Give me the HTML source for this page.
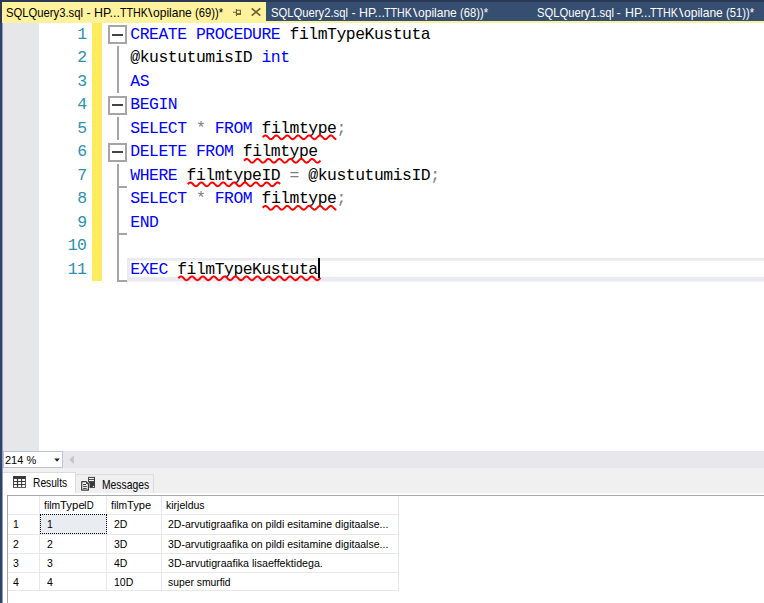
<!DOCTYPE html>
<html lang="et">
<head>
<meta charset="utf-8">
<title>SQLQuery3.sql</title>
<style>
html,body{margin:0;padding:0;}
body{width:764px;height:603px;overflow:hidden;background:#fff;position:relative;font-family:"Liberation Sans",sans-serif;}
.abs{position:absolute;}
#topstrip{left:0;top:0;width:764px;height:2px;background:#293955;}
#tabbar{left:0;top:2px;width:764px;height:19px;background:#364e6f;}
#yline{left:0;top:20.6px;width:764px;height:2.3px;background:#fff29d;}
#lborder{left:0;top:0;width:2px;height:603px;background:linear-gradient(#293955 0,#293955 22px,#30446a 24px,#30446a 100%);}
#lborder2{left:2px;top:23px;width:1.2px;height:580px;background:#8f9dc0;}
#acttab{left:2px;top:2px;width:264px;height:21px;background:#fff29d;}
.tabtxt{top:3.8px;height:19px;line-height:19px;font-size:12.2px;white-space:pre;}
#gutter{left:3px;top:23px;width:36px;height:428px;background:#e6e7e8;}
#ybar{left:92px;top:23px;width:10px;height:258.4px;background:#ffeb5e;}
.ln{left:40px;width:46.5px;text-align:right;color:#2b91af;}
.code,.ln{font-family:"Liberation Mono",monospace;font-size:16.4px;letter-spacing:-0.465px;line-height:23.5px;height:23.5px;white-space:pre;}
.code{left:130.3px;color:#000;}
.k{color:#0000ff}.g{color:#808080}
.box{left:108px;width:15px;height:15px;border:2px solid #a5a5a5;background:#fff;}
.box i{position:absolute;left:2px;top:6.5px;width:11px;height:2px;background:#444;}
.vl{left:117px;width:2px;background:#a5a5a5;}
.tick{left:117px;width:10px;height:2px;background:#a5a5a5;}
#curline{left:127px;top:258px;width:637px;height:16.2px;border:solid #eaeaf2;border-width:2.7px 0 4.8px 2.85px;}
#caret{left:318.2px;top:258.2px;width:2px;height:20.3px;background:#000;}
#scrollband{left:3px;top:451px;width:761px;height:17px;background:#e8e8ec;}
#zoombox{left:3px;top:451px;width:58px;height:15px;border:1px solid #b9c1d9;background:#fff;}
#restabrow{left:3px;top:468px;width:761px;height:25px;background:#f0f0f0;}
.sm{font-size:11px;white-space:nowrap;color:#000;transform-origin:0 50%;}
.gl{background:#e8e8e8;}
.gc,.gh{font-size:11.6px;white-space:pre;}
</style>
</head>
<body>
<div class="abs" id="topstrip"></div>
<div class="abs" id="tabbar"></div>
<div class="abs" id="yline"></div>
<div class="abs" id="acttab"></div>
<div class="abs" id="lborder"></div>
<div class="abs" id="lborder2"></div>
<div class="abs tabtxt" id="t1" style="left:5.8px;color:#000;"><span style="display:inline-block;transform-origin:0 50%;transform:scaleX(0.9229);margin-right:-6.43px">SQLQuery3.sql</span><span style="display:inline-block;transform-origin:0 50%;transform:scaleX(1.0236);margin-right:0.26px"> - </span><span style="display:inline-block;transform-origin:0 50%;transform:scaleX(1.0144);margin-right:0.37px">HP...</span><span style="display:inline-block;transform-origin:0 50%;transform:scaleX(0.8797);margin-right:-3.83px">TTHK</span><span style="display:inline-block;transform-origin:0 50%;transform:scaleX(1.3000);margin-left:0.55px;margin-right:1.56px">\</span><span style="display:inline-block;transform-origin:0 50%;transform:scaleX(0.9870);margin-right:-0.51px">opilane</span><span style="display:inline-block;transform-origin:0 50%;transform:scaleX(0.8258);margin-right:-0.59px"> </span><span style="display:inline-block;transform-origin:0 50%;transform:scaleX(0.9185);margin-right:-2.48px">(69))*</span></div>
<div class="abs tabtxt" id="t2" style="left:270.6px;color:#fff;"><span style="display:inline-block;transform-origin:0 50%;transform:scaleX(0.9229);margin-right:-6.43px">SQLQuery2.sql</span><span style="display:inline-block;transform-origin:0 50%;transform:scaleX(1.0236);margin-right:0.26px"> - </span><span style="display:inline-block;transform-origin:0 50%;transform:scaleX(1.0144);margin-right:0.37px">HP...</span><span style="display:inline-block;transform-origin:0 50%;transform:scaleX(0.8797);margin-right:-3.83px">TTHK</span><span style="display:inline-block;transform-origin:0 50%;transform:scaleX(1.3000);margin-left:0.55px;margin-right:1.56px">\</span><span style="display:inline-block;transform-origin:0 50%;transform:scaleX(0.9870);margin-right:-0.51px">opilane</span><span style="display:inline-block;transform-origin:0 50%;transform:scaleX(0.8258);margin-right:-0.59px"> </span><span style="display:inline-block;transform-origin:0 50%;transform:scaleX(0.9185);margin-right:-2.48px">(68))*</span></div>
<div class="abs tabtxt" id="t3" style="left:536.5px;color:#fff;"><span style="display:inline-block;transform-origin:0 50%;transform:scaleX(0.9229);margin-right:-6.43px">SQLQuery1.sql</span><span style="display:inline-block;transform-origin:0 50%;transform:scaleX(1.0236);margin-right:0.26px"> - </span><span style="display:inline-block;transform-origin:0 50%;transform:scaleX(1.0144);margin-right:0.37px">HP...</span><span style="display:inline-block;transform-origin:0 50%;transform:scaleX(0.8797);margin-right:-3.83px">TTHK</span><span style="display:inline-block;transform-origin:0 50%;transform:scaleX(1.3000);margin-left:0.55px;margin-right:1.56px">\</span><span style="display:inline-block;transform-origin:0 50%;transform:scaleX(0.9870);margin-right:-0.51px">opilane</span><span style="display:inline-block;transform-origin:0 50%;transform:scaleX(0.8258);margin-right:-0.59px"> </span><span style="display:inline-block;transform-origin:0 50%;transform:scaleX(0.9185);margin-right:-2.48px">(51))*</span></div>
<svg class="abs" style="left:230px;top:4px" width="34" height="17" viewBox="0 0 34 17">
 <g stroke="#6a5d30" stroke-width="1.1" fill="none">
  <path d="M3,8.3 H6.4 M6.45,5 V11.9 M6.4,6.2 H10.4 V10"/>
  <rect x="6.4" y="9.2" width="4.5" height="1.8" fill="#6a5d30" stroke="none"/>
  <path d="M21.7,4.4 L30.3,11.6 M30.3,4.4 L21.7,11.6" stroke-width="1.5"/>
 </g>
</svg>
<div class="abs" id="gutter"></div>
<div class="abs" id="ybar"></div>

<svg class="abs" style="left:0;top:255px" width="764" height="30" viewBox="0 255 764 30"><rect x="127" y="258" width="640" height="23.7" fill="#eaeaf2"/><rect x="129.85" y="260.65" width="640" height="16.25" fill="#fff"/></svg>
<div class="abs box" style="top:25.15px"><i></i></div>
<div class="abs box" style="top:95.65px"><i></i></div>
<div class="abs box" style="top:142.65px"><i></i></div>
<div class="abs vl" style="top:46.40px;height:47.00px"></div>
<div class="abs vl" style="top:116.90px;height:23.50px"></div>
<div class="abs vl" style="top:163.90px;height:117.50px"></div>
<div class="abs tick" style="top:185.90px"></div>
<div class="abs tick" style="top:232.90px"></div>
<div class="abs tick" style="top:279.90px"></div>
<div class="abs ln" style="top:22.70px">1</div>
<div class="abs code" style="top:22.70px"><span class="k">CREATE PROCEDURE</span> filmTypeKustuta</div>
<div class="abs ln" style="top:46.20px">2</div>
<div class="abs code" style="top:46.20px">@kustutumisID <span class="k">int</span></div>
<div class="abs ln" style="top:69.70px">3</div>
<div class="abs code" style="top:69.70px"><span class="k">AS</span></div>
<div class="abs ln" style="top:93.20px">4</div>
<div class="abs code" style="top:93.20px"><span class="k">BEGIN</span></div>
<div class="abs ln" style="top:116.70px">5</div>
<div class="abs code" style="top:116.70px"><span class="k">SELECT</span> <span class="g">*</span> <span class="k">FROM</span> filmtype<span class="g">;</span></div>
<div class="abs ln" style="top:140.20px">6</div>
<div class="abs code" style="top:140.20px"><span class="k">DELETE FROM</span> filmtype</div>
<div class="abs ln" style="top:163.70px">7</div>
<div class="abs code" style="top:163.70px"><span class="k">WHERE</span> filmtypeID <span class="g">=</span> @kustutumisID<span class="g">;</span></div>
<div class="abs ln" style="top:187.20px">8</div>
<div class="abs code" style="top:187.20px"><span class="k">SELECT</span> <span class="g">*</span> <span class="k">FROM</span> filmtype<span class="g">;</span></div>
<div class="abs ln" style="top:210.70px">9</div>
<div class="abs code" style="top:210.70px"><span class="k">END</span></div>
<div class="abs ln" style="top:234.20px">10</div>
<div class="abs ln" style="top:257.70px">11</div>
<div class="abs code" style="top:257.70px"><span class="k">EXEC</span> filmTypeKustuta</div>
<svg class="abs" style="left:0;top:0" width="764" height="300" viewBox="0 0 764 300"><g fill="none" stroke="#ff0000" stroke-width="1.95" stroke-linecap="butt" stroke-linejoin="round"><path d="M262.75,137.27 L263.44,136.53 L264.14,135.92 L264.83,135.52 L265.53,135.40 L266.22,135.58 L266.92,136.04 L267.61,136.69 L268.30,137.44 L269.00,138.17 L269.69,138.76 L270.39,139.12 L271.08,139.19 L271.78,138.96 L272.47,138.47 L273.17,137.80 L273.86,137.04 L274.55,136.33 L275.25,135.77 L275.94,135.45 L276.64,135.43 L277.33,135.70 L278.03,136.22 L278.72,136.91 L279.41,137.67 L280.11,138.37 L280.80,138.89 L281.50,139.17 L282.19,139.15 L282.89,138.84 L283.58,138.28 L284.27,137.57 L284.97,136.82 L285.66,136.14 L286.36,135.65 L287.05,135.41 L287.75,135.48 L288.44,135.83 L289.13,136.42 L289.83,137.14 L290.52,137.89 L291.22,138.55 L291.91,139.01 L292.61,139.20 L293.30,139.09 L294.00,138.69 L294.69,138.08 L295.38,137.34 L296.08,136.60 L296.77,135.97 L297.47,135.55 L298.16,135.40 L298.86,135.56 L299.55,135.99 L300.24,136.62 L300.94,137.37 L301.63,138.10 L302.33,138.71 L303.02,139.10 L303.72,139.20 L304.41,139.00 L305.10,138.53 L305.80,137.87 L306.49,137.12 L307.19,136.39 L307.88,135.81 L308.58,135.47 L309.27,135.42 L309.97,135.66 L310.66,136.16 L311.35,136.84 L312.05,137.60 L312.74,138.31 L313.44,138.85 L314.13,139.16 L314.83,139.17 L315.52,138.88 L316.21,138.35 L316.91,137.64 L317.60,136.89 L318.30,136.20 L318.99,135.68 L319.69,135.42 L320.38,135.46 L321.07,135.79 L321.77,136.35 L322.46,137.07 L323.16,137.82 L323.85,138.49 L324.55,138.97 L325.24,139.19 L325.93,139.11 L326.63,138.74 L327.32,138.15 L328.02,137.42 L328.71,136.67 L329.41,136.02 L330.10,135.57 L330.80,135.40 L331.49,135.53 L332.18,135.93 L332.88,136.56 L333.57,137.30 L334.27,138.04 L334.96,138.66 L335.66,139.07 L336.35,139.20"/><path d="M244.00,160.77 L244.70,160.03 L245.39,159.42 L246.09,159.02 L246.78,158.90 L247.48,159.09 L248.17,159.54 L248.87,160.20 L249.56,160.95 L250.26,161.68 L250.95,162.27 L251.65,162.62 L252.35,162.69 L253.04,162.45 L253.74,161.96 L254.43,161.28 L255.13,160.52 L255.82,159.81 L256.52,159.26 L257.21,158.95 L257.91,158.93 L258.60,159.21 L259.30,159.74 L260.00,160.44 L260.69,161.20 L261.39,161.89 L262.08,162.41 L262.78,162.68 L263.47,162.64 L264.17,162.32 L264.86,161.75 L265.56,161.04 L266.25,160.28 L266.95,159.61 L267.65,159.13 L268.34,158.91 L269.04,158.99 L269.73,159.36 L270.43,159.96 L271.12,160.69 L271.82,161.44 L272.51,162.09 L273.21,162.53 L273.90,162.70 L274.60,162.57 L275.30,162.16 L275.99,161.53 L276.69,160.79 L277.38,160.05 L278.08,159.43 L278.77,159.02 L279.47,158.90 L280.16,159.08 L280.86,159.53 L281.55,160.19 L282.25,160.94 L282.95,161.67 L283.64,162.26 L284.34,162.62 L285.03,162.69 L285.73,162.46 L286.42,161.97 L287.12,161.29 L287.81,160.54 L288.51,159.83 L289.20,159.27 L289.90,158.95 L290.60,158.93 L291.29,159.20 L291.99,159.73 L292.68,160.43 L293.38,161.18 L294.07,161.88 L294.77,162.40 L295.46,162.67 L296.16,162.65 L296.85,162.33 L297.55,161.77 L298.25,161.05 L298.94,160.30 L299.64,159.62 L300.33,159.13 L301.03,158.91 L301.72,158.99 L302.42,159.35 L303.11,159.94 L303.81,160.67 L304.50,161.42 L305.20,162.07 L305.90,162.52 L306.59,162.70 L307.29,162.57 L307.98,162.17 L308.68,161.54 L309.37,160.80 L310.07,160.06 L310.76,159.44 L311.46,159.03 L312.15,158.90 L312.85,159.07 L313.55,159.52 L314.24,160.17 L314.94,160.92 L315.63,161.65 L316.33,162.25 L317.02,162.61 L317.72,162.69 L318.41,162.47 L319.11,161.98 L319.80,161.31 L320.50,160.55"/><path d="M187.75,184.27 L188.45,183.53 L189.15,182.91 L189.85,182.51 L190.55,182.40 L191.25,182.60 L191.95,183.07 L192.65,183.73 L193.35,184.49 L194.05,185.21 L194.75,185.80 L195.45,186.14 L196.15,186.18 L196.85,185.92 L197.54,185.41 L198.24,184.71 L198.94,183.95 L199.64,183.25 L200.34,182.71 L201.04,182.43 L201.74,182.45 L202.44,182.76 L203.14,183.33 L203.84,184.04 L204.54,184.80 L205.24,185.48 L205.94,185.97 L206.64,186.19 L207.34,186.11 L208.04,185.74 L208.74,185.13 L209.44,184.39 L210.14,183.64 L210.84,183.00 L211.54,182.56 L212.24,182.40 L212.94,182.55 L213.64,182.97 L214.34,183.62 L215.04,184.37 L215.73,185.11 L216.43,185.72 L217.13,186.10 L217.83,186.19 L218.53,185.98 L219.23,185.51 L219.93,184.83 L220.63,184.07 L221.33,183.35 L222.03,182.78 L222.73,182.46 L223.43,182.42 L224.13,182.70 L224.83,183.22 L225.53,183.92 L226.23,184.69 L226.93,185.38 L227.63,185.91 L228.33,186.18 L229.03,186.14 L229.73,185.81 L230.43,185.24 L231.13,184.52 L231.83,183.76 L232.53,183.09 L233.23,182.61 L233.93,182.40 L234.62,182.50 L235.32,182.89 L236.02,183.50 L236.72,184.24 L237.42,184.99 L238.12,185.63 L238.82,186.06 L239.52,186.20 L240.22,186.04 L240.92,185.60 L241.62,184.95 L242.32,184.20 L243.02,183.46 L243.72,182.86 L244.42,182.49 L245.12,182.41 L245.82,182.63 L246.52,183.12 L247.22,183.81 L247.92,184.56 L248.62,185.28 L249.32,185.84 L250.02,186.15 L250.72,186.17 L251.42,185.88 L252.12,185.34 L252.81,184.64 L253.51,183.88 L254.21,183.18 L254.91,182.67 L255.61,182.42 L256.31,182.47 L257.01,182.81 L257.71,183.39 L258.41,184.12 L259.11,184.88 L259.81,185.54 L260.51,186.01 L261.21,186.20 L261.91,186.08 L262.61,185.68 L263.31,185.06 L264.01,184.32 L264.71,183.57 L265.41,182.94 L266.11,182.53 L266.81,182.40 L267.51,182.58 L268.21,183.03 L268.91,183.69 L269.61,184.44 L270.31,185.18 L271.00,185.77 L271.70,186.12 L272.40,186.19 L273.10,185.95 L273.80,185.44 L274.50,184.76 L275.20,184.00 L275.90,183.29 L276.60,182.74 L277.30,182.44 L278.00,182.44 L278.70,182.74 L279.40,183.29 L280.10,184.00"/><path d="M262.75,207.77 L263.44,207.03 L264.14,206.42 L264.83,206.02 L265.53,205.90 L266.22,206.08 L266.92,206.54 L267.61,207.19 L268.30,207.94 L269.00,208.67 L269.69,209.26 L270.39,209.62 L271.08,209.69 L271.78,209.46 L272.47,208.97 L273.17,208.30 L273.86,207.54 L274.55,206.83 L275.25,206.27 L275.94,205.95 L276.64,205.93 L277.33,206.20 L278.03,206.72 L278.72,207.41 L279.41,208.17 L280.11,208.87 L280.80,209.39 L281.50,209.67 L282.19,209.65 L282.89,209.34 L283.58,208.78 L284.27,208.07 L284.97,207.32 L285.66,206.64 L286.36,206.15 L287.05,205.91 L287.75,205.98 L288.44,206.33 L289.13,206.92 L289.83,207.64 L290.52,208.39 L291.22,209.05 L291.91,209.51 L292.61,209.70 L293.30,209.59 L294.00,209.19 L294.69,208.58 L295.38,207.84 L296.08,207.10 L296.77,206.47 L297.47,206.05 L298.16,205.90 L298.86,206.06 L299.55,206.49 L300.24,207.12 L300.94,207.87 L301.63,208.60 L302.33,209.21 L303.02,209.60 L303.72,209.70 L304.41,209.50 L305.10,209.03 L305.80,208.37 L306.49,207.62 L307.19,206.89 L307.88,206.31 L308.58,205.97 L309.27,205.92 L309.97,206.16 L310.66,206.66 L311.35,207.34 L312.05,208.10 L312.74,208.81 L313.44,209.35 L314.13,209.66 L314.83,209.67 L315.52,209.38 L316.21,208.85 L316.91,208.14 L317.60,207.39 L318.30,206.70 L318.99,206.18 L319.69,205.92 L320.38,205.96 L321.07,206.29 L321.77,206.85 L322.46,207.57 L323.16,208.32 L323.85,208.99 L324.55,209.47 L325.24,209.69 L325.93,209.61 L326.63,209.24 L327.32,208.65 L328.02,207.92 L328.71,207.17 L329.41,206.52 L330.10,206.07 L330.80,205.90 L331.49,206.03 L332.18,206.43 L332.88,207.06 L333.57,207.80 L334.27,208.54 L334.96,209.16 L335.66,209.57 L336.35,209.70"/><path d="M178.38,278.27 L179.07,277.53 L179.77,276.91 L180.47,276.52 L181.16,276.40 L181.86,276.59 L182.56,277.05 L183.25,277.71 L183.95,278.46 L184.65,279.19 L185.34,279.78 L186.04,280.13 L186.74,280.19 L187.43,279.95 L188.13,279.44 L188.83,278.76 L189.52,278.00 L190.22,277.29 L190.92,276.74 L191.61,276.44 L192.31,276.44 L193.01,276.73 L193.70,277.27 L194.40,277.97 L195.10,278.73 L195.79,279.42 L196.49,279.93 L197.19,280.18 L197.88,280.13 L198.58,279.79 L199.28,279.22 L199.97,278.49 L200.67,277.74 L201.37,277.07 L202.06,276.60 L202.76,276.40 L203.46,276.51 L204.15,276.89 L204.85,277.50 L205.55,278.24 L206.24,278.99 L206.94,279.63 L207.64,280.05 L208.33,280.20 L209.03,280.05 L209.73,279.61 L210.42,278.97 L211.12,278.22 L211.82,277.49 L212.51,276.88 L213.21,276.50 L213.91,276.41 L214.60,276.61 L215.30,277.09 L216.00,277.76 L216.69,278.51 L217.39,279.23 L218.09,279.81 L218.78,280.14 L219.48,280.18 L220.18,279.92 L220.87,279.41 L221.57,278.71 L222.27,277.96 L222.96,277.25 L223.66,276.72 L224.36,276.43 L225.05,276.44 L225.75,276.75 L226.45,277.31 L227.14,278.02 L227.84,278.78 L228.54,279.46 L229.23,279.95 L229.93,280.19 L230.63,280.12 L231.32,279.76 L232.02,279.17 L232.72,278.45 L233.41,277.69 L234.11,277.04 L234.81,276.58 L235.50,276.40 L236.20,276.52 L236.90,276.93 L237.59,277.55 L238.29,278.29 L238.99,279.03 L239.68,279.66 L240.38,280.07 L241.08,280.20 L241.77,280.03 L242.47,279.58 L243.17,278.93 L243.86,278.18 L244.56,277.44 L245.26,276.85 L245.95,276.49 L246.65,276.41 L247.35,276.64 L248.04,277.13 L248.74,277.80 L249.44,278.56 L250.13,279.27 L250.83,279.83 L251.53,280.15 L252.22,280.17 L252.92,279.90 L253.62,279.37 L254.31,278.67 L255.01,277.91 L255.71,277.21 L256.40,276.69 L257.10,276.42 L257.80,276.46 L258.49,276.78 L259.19,277.35 L259.89,278.07 L260.58,278.82 L261.28,279.50 L261.98,279.98 L262.67,280.19 L263.37,280.11 L264.07,279.73 L264.76,279.13 L265.46,278.40 L266.16,277.65 L266.85,277.00 L267.55,276.56 L268.25,276.40 L268.94,276.54 L269.64,276.96 L270.34,277.59 L271.03,278.34 L271.73,279.08 L272.43,279.69 L273.12,280.09 L273.82,280.20 L274.52,280.00 L275.22,279.54 L275.91,278.88 L276.61,278.13 L277.31,277.40 L278.00,276.82 L278.70,276.47 L279.40,276.42 L280.09,276.66 L280.79,277.16 L281.49,277.85 L282.18,278.61 L282.88,279.32 L283.58,279.86 L284.27,280.16 L284.97,280.16 L285.67,279.87 L286.36,279.32 L287.06,278.62 L287.76,277.86 L288.45,277.17 L289.15,276.66 L289.85,276.42 L290.54,276.47 L291.24,276.81 L291.94,277.39 L292.63,278.12 L293.33,278.87 L294.03,279.53 L294.72,280.00 L295.42,280.20 L296.12,280.09 L296.81,279.70 L297.51,279.09 L298.21,278.35 L298.90,277.60 L299.60,276.97 L300.30,276.54 L300.99,276.40 L301.69,276.56 L302.39,276.99 L303.08,277.64 L303.78,278.39 L304.48,279.12 L305.17,279.73 L305.87,280.10 L306.57,280.19 L307.26,279.98 L307.96,279.50 L308.66,278.83 L309.35,278.08 L310.05,277.36 L310.75,276.79 L311.44,276.46 L312.14,276.42 L312.84,276.68 L313.53,277.20 L314.23,277.90 L314.93,278.66 L315.62,279.36 L316.32,279.89 L317.02,280.17 L317.71,280.15 L318.41,279.84 L319.11,279.28 L319.80,278.57 L320.50,277.81"/></g></svg>
<div class="abs" id="caret"></div>

<div class="abs" id="scrollband"></div>
<div class="abs" id="zoombox"></div>
<div class="abs sm" id="zt" style="left:5px;top:453px;line-height:15px;height:15px;">214 %</div>
<svg class="abs" style="left:50px;top:452px" width="30" height="16" viewBox="0 0 30 16">
 <path d="M4.3,6.5 H9.8 L7.05,9.7 Z" fill="#1e1e1e"/>
 <path d="M23.8,3.6 V12.1 L19.2,7.85 Z" fill="#c3c4cc"/>
</svg>
<div class="abs" id="restabrow"></div>
<div class="abs" style="left:76px;top:473.6px;width:78px;height:20px;border:1px solid #dcdcdc;border-left:none;background:#f0f0f0;box-sizing:border-box"></div>
<div class="abs" style="left:3px;top:472px;width:73px;height:23px;background:#fff;border-top:1px solid #dcdcdc;border-right:1px solid #dcdcdc;box-sizing:border-box"></div>
<div class="abs" style="left:3px;top:493px;width:761px;height:1.5px;background:#fff;"></div>
<div class="abs" style="left:7px;top:494.7px;width:757px;height:1.3px;background:#a9a9b2;"></div>
<div class="abs" style="left:6.8px;top:494.7px;width:1.2px;height:109px;background:#a9a9b2;"></div>
<svg class="abs" style="left:12px;top:475px" width="16" height="14" viewBox="0 0 16 14">
 <rect x="1.04" y="1" width="12.86" height="11.8" fill="#383838"/>
 <g fill="#fff"><rect x="1.97" y="4" width="3" height="1.9" rx="0.3"/><rect x="6.1" y="4" width="3" height="1.9" rx="0.3"/><rect x="10.1" y="4" width="3" height="1.9" rx="0.3"/><rect x="1.97" y="7.1" width="3" height="1.9" rx="0.3"/><rect x="6.1" y="7.1" width="3" height="1.9" rx="0.3"/><rect x="10.1" y="7.1" width="3" height="1.9" rx="0.3"/><rect x="1.97" y="10.1" width="3" height="1.9" rx="0.3"/><rect x="6.1" y="10.1" width="3" height="1.9" rx="0.3"/><rect x="10.1" y="10.1" width="3" height="1.9" rx="0.3"/></g>
</svg>
<div class="abs sm" id="rt" style="left:33px;top:474px;line-height:19px;font-size:12.4px;transform:scaleX(0.825)">Results</div>
<svg class="abs" style="left:80px;top:476px" width="17" height="16" viewBox="0 0 17 16">
 <rect x="8.1" y="0.9" width="6.9" height="11" fill="#3a3a3a"/>
 <rect x="9" y="1.9" width="5" height="1.2" fill="#f4f4f4"/>
 <rect x="9" y="4" width="5" height="1.1" fill="#f4f4f4"/>
 <circle cx="13.5" cy="10.4" r="0.65" fill="#f4f4f4"/>
 <path d="M1.7,5.7 H6.2 L8.4,7.9 V14.2 H1.7 Z" fill="#fcfcfc" stroke="#fff" stroke-width="2.2"/>
 <path d="M1.7,5.7 H6.2 L8.4,7.9 V14.2 H1.7 Z" fill="#fcfcfc" stroke="#3a3a3a" stroke-width="1.2" stroke-linejoin="round"/>
 <path d="M6.1,5.8 V8 H8.3 Z" fill="#3a3a3a"/>
 <path d="M3.1,8.5 H6 M3.1,10.4 H6.8 M3.1,12.4 H6.8" stroke="#3a3a3a" stroke-width="1" fill="none"/>
</svg>
<div class="abs sm" id="mt" style="left:102.4px;top:476.3px;line-height:19px;font-size:12.4px;transform:scaleX(0.833)">Messages</div>

<div class="abs gl" style="left:7.6px;top:514.2px;width:391.0px;height:1px"></div>
<div class="abs gl" style="left:7.6px;top:533.7px;width:391.0px;height:1px"></div>
<div class="abs gl" style="left:7.6px;top:552.6px;width:391.0px;height:1px"></div>
<div class="abs gl" style="left:7.6px;top:571.7px;width:391.0px;height:1px"></div>
<div class="abs gl" style="left:7.6px;top:590.2px;width:391.0px;height:1px"></div>
<div class="abs gl" style="left:38.8px;top:495.5px;width:1px;height:95.7px"></div>
<div class="abs gl" style="left:105.9px;top:495.5px;width:1px;height:95.7px"></div>
<div class="abs gl" style="left:160.9px;top:495.5px;width:1px;height:95.7px"></div>
<div class="abs gl" style="left:397.6px;top:495.5px;width:1px;height:95.7px"></div>
<div class="abs" style="left:39.8px;top:513.7px;width:67.6px;height:20.2px;box-sizing:border-box;background:#e9edf1;border:1.1px dotted #000"></div>
<div class="abs sm gh" style="left:43.5px;top:494.9px;height:19px;line-height:19px"><span style="display:inline-block;transform-origin:0 50%;transform:scaleX(0.8929);margin-right:-1.93px">film</span><span style="display:inline-block;transform-origin:0 50%;transform:scaleX(0.9865);margin-right:-0.34px">Type</span><span style="display:inline-block;transform-origin:0 50%;transform:scaleX(0.8280);margin-right:-1.99px">ID</span></div>
<div class="abs sm gh" style="left:110.8px;top:494.9px;height:19px;line-height:19px"><span style="display:inline-block;transform-origin:0 50%;transform:scaleX(0.8929);margin-right:-1.93px">film</span><span style="display:inline-block;transform-origin:0 50%;transform:scaleX(0.9586);margin-right:-1.04px">Type</span></div>
<div class="abs sm gh" style="left:166.0px;top:494.9px;height:19px;line-height:19px"><span style="display:inline-block;transform-origin:0 50%;transform:scaleX(0.9076);margin-right:-3.93px">kirjeldus</span></div>
<div class="abs sm gc" style="left:13px;top:514.4px;height:19px;line-height:19px"><span style="display:inline-block;transform-origin:0 50%;transform:scaleX(0.9050);margin-right:-0.61px">1</span></div>
<div class="abs sm gc" style="left:47px;top:514.4px;height:19px;line-height:19px"><span style="display:inline-block;transform-origin:0 50%;transform:scaleX(0.9050);margin-right:-0.61px">1</span></div>
<div class="abs sm gc" style="left:114px;top:514.4px;height:19px;line-height:19px"><span style="display:inline-block;transform-origin:0 50%;transform:scaleX(0.9050);margin-right:-1.41px">2D</span></div>
<div class="abs sm gc" style="left:168.3px;top:514.4px;height:19px;line-height:19px"><span style="display:inline-block;transform-origin:0 50%;transform:scaleX(0.9068);margin-right:-22.65px">2D-arvutigraafika on pildi esitamine digitaalse...</span></div>
<div class="abs sm gc" style="left:13px;top:533.9px;height:19px;line-height:19px"><span style="display:inline-block;transform-origin:0 50%;transform:scaleX(0.9050);margin-right:-0.61px">2</span></div>
<div class="abs sm gc" style="left:47px;top:533.9px;height:19px;line-height:19px"><span style="display:inline-block;transform-origin:0 50%;transform:scaleX(0.9050);margin-right:-0.61px">2</span></div>
<div class="abs sm gc" style="left:114px;top:533.9px;height:19px;line-height:19px"><span style="display:inline-block;transform-origin:0 50%;transform:scaleX(0.9050);margin-right:-1.41px">3D</span></div>
<div class="abs sm gc" style="left:168.3px;top:533.9px;height:19px;line-height:19px"><span style="display:inline-block;transform-origin:0 50%;transform:scaleX(0.9068);margin-right:-22.65px">3D-arvutigraafika on pildi esitamine digitaalse...</span></div>
<div class="abs sm gc" style="left:13px;top:552.8px;height:19px;line-height:19px"><span style="display:inline-block;transform-origin:0 50%;transform:scaleX(0.9050);margin-right:-0.61px">3</span></div>
<div class="abs sm gc" style="left:47px;top:552.8px;height:19px;line-height:19px"><span style="display:inline-block;transform-origin:0 50%;transform:scaleX(0.9050);margin-right:-0.61px">3</span></div>
<div class="abs sm gc" style="left:114px;top:552.8px;height:19px;line-height:19px"><span style="display:inline-block;transform-origin:0 50%;transform:scaleX(0.9050);margin-right:-1.41px">4D</span></div>
<div class="abs sm gc" style="left:168.3px;top:552.8px;height:19px;line-height:19px"><span style="display:inline-block;transform-origin:0 50%;transform:scaleX(0.9179);margin-right:-13.84px">3D-arvutigraafika lisaeffektidega.</span></div>
<div class="abs sm gc" style="left:13px;top:571.9px;height:19px;line-height:19px"><span style="display:inline-block;transform-origin:0 50%;transform:scaleX(0.9050);margin-right:-0.61px">4</span></div>
<div class="abs sm gc" style="left:47px;top:571.9px;height:19px;line-height:19px"><span style="display:inline-block;transform-origin:0 50%;transform:scaleX(0.9050);margin-right:-0.61px">4</span></div>
<div class="abs sm gc" style="left:114px;top:571.9px;height:19px;line-height:19px"><span style="display:inline-block;transform-origin:0 50%;transform:scaleX(0.9050);margin-right:-2.02px">10D</span></div>
<div class="abs sm gc" style="left:168.3px;top:571.9px;height:19px;line-height:19px"><span style="display:inline-block;transform-origin:0 50%;transform:scaleX(0.8913);margin-right:-7.63px">super smurfid</span></div>
</body></html>
